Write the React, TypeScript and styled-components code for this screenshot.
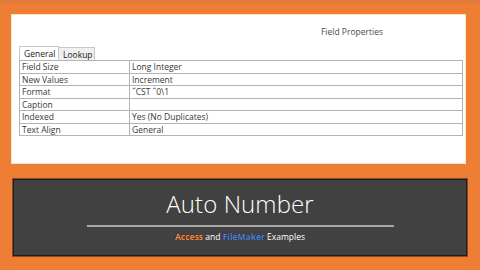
import styled, { createGlobalStyle } from "styled-components";

const GlobalStyle = createGlobalStyle`
  html, body {
    margin: 0;
    padding: 0;
    background: #ee7e33;
  }
`;

const Page = styled.div`
  width: 480px;
  height: 270px;
  overflow: hidden;
  display: flex;
  flex-direction: column;
  background: linear-gradient(#dc7a3c 0px, #ee7e33 6px);
  font-family: "Open Sans", "Noto Sans", sans-serif;
`;

const Sheet = styled.div`
  margin: 15px 0 0 12px;
  width: 453px;
  height: 148px;
  background: #ffffff;
  box-shadow: 0 0 0 1px #f6e7c8;
  display: flex;
  flex-direction: column;
  padding: 0 0 0 7px;
  box-sizing: border-box;
`;

const SheetHeader = styled.div`
  height: 32px;
  display: flex;
  align-items: center;
  justify-content: flex-end;
  padding-right: 82px;
  font-size: 8.5px;
  color: #4a4a4a;
`;

const Tabs = styled.div`
  display: flex;
  align-items: flex-end;
  height: 13px;
`;

const Tab = styled.div<{ $active?: boolean }>`
  height: ${(p) => (p.$active ? "13px" : "12px")};
  padding: 0 4px;
  width: ${(p) => (p.$active ? "30px" : "27px")};
  display: flex;
  align-items: center;
  font-size: 8.5px;
  color: #1a1a1a;
  background: ${(p) => (p.$active ? "#ffffff" : "#f0f0f0")};
  border: 1px solid #c8c8c8;
  border-bottom: none;
  ${(p) => !p.$active && "border-left: none;"}
`;

const Grid = styled.table`
  border-collapse: collapse;
  width: 444px;
  table-layout: fixed;
`;

const Cell = styled.td<{ $label?: boolean }>`
  height: 11.5px;
  padding: 0 2px;
  border: 1px solid #b4b4b4;
  font-size: 8.5px;
  line-height: 11px;
  color: #383838;
  white-space: nowrap;
  width: ${(p) => (p.$label ? "105px" : "auto")};
`;

const Banner = styled.div`
  margin: 16px 0 0 13px;
  width: 454px;
  height: 77px;
  background: #414141;
  border: 1px solid #1c1c1c;
  box-shadow: 0 0 0 1px #8a4a22;
  box-sizing: border-box;
  display: flex;
  flex-direction: column;
  align-items: center;
`;

const Title = styled.div`
  margin-top: 8px;
  font-size: 24px;
  font-weight: 300;
  color: #ffffff;
  letter-spacing: 0.1px;
  line-height: 32px;
`;

const Rule = styled.div`
  margin-top: 5px;
  width: 307px;
  height: 2px;
  background: #a8a8a8;
`;

const Subtitle = styled.div`
  margin-top: 4px;
  font-size: 8.5px;
  color: #ffffff;
  line-height: 12px;
`;

const Brand = styled.span<{ $color: string }>`
  color: ${(p) => p.$color};
  font-weight: 700;
  text-shadow: 0 0 1px rgba(0, 0, 0, 0.6);
`;

const rows = [
  ["Field Size", "Long Integer"],
  ["New Values", "Increment"],
  ["Format", "\u02ddCST \u02dd0\\1"],
  ["Caption", ""],
  ["Indexed", "Yes (No Duplicates)"],
  ["Text Align", "General"],
];

export default function App() {
  return (
    <>
      <GlobalStyle />
      <Page>
        <Sheet>
          <SheetHeader>Field Properties</SheetHeader>
          <Tabs>
            <Tab $active>General</Tab>
            <Tab>Lookup</Tab>
          </Tabs>
          <Grid>
            <tbody>
              {rows.map(([k, v]) => (
                <tr key={k}>
                  <Cell $label>{k}</Cell>
                  <Cell>{v}</Cell>
                </tr>
              ))}
            </tbody>
          </Grid>
        </Sheet>
        <Banner>
          <Title>Auto Number</Title>
          <Rule />
          <Subtitle>
            <Brand $color="#f08a3c">Access</Brand> and{" "}
            <Brand $color="#4f7fd6">FileMaker</Brand> Examples
          </Subtitle>
        </Banner>
      </Page>
    </>
  );
}
